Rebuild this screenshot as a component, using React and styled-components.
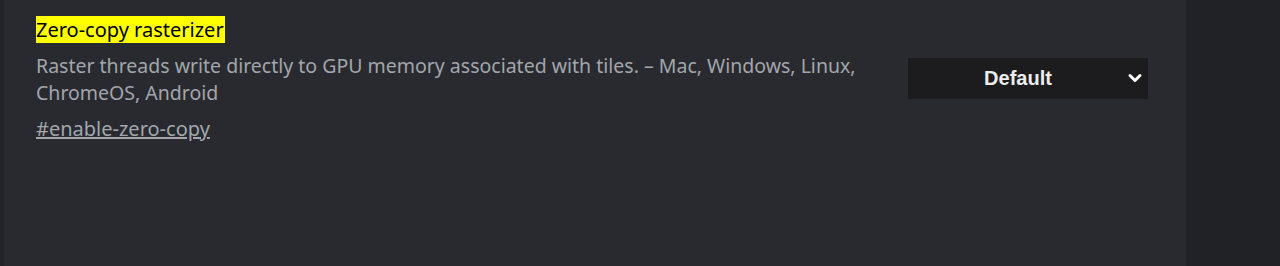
import React from 'react';
import styled, { createGlobalStyle } from 'styled-components';

const GlobalStyle = createGlobalStyle`
  html, body {
    margin: 0;
    padding: 0;
    background: #212226;
    height: 266px;
    overflow: hidden;
  }
`;

const Page = styled.div`
  display: flex;
  height: 266px;
  background: #212226;
`;

const Panel = styled.main`
  width: 1186px;
  height: 266px;
  border-left: 4px solid #222328;
  background: #292a2f;
  box-sizing: border-box;
  padding: 17px 38px 0 32px;
`;

const Experiment = styled.section`
  display: flex;
  align-items: flex-start;
  justify-content: space-between;
`;

const Details = styled.div`
  width: 849px;
  font-family: "Noto Sans", "Open Sans", sans-serif;
  font-size: 19.5px;
`;

const Title = styled.h2`
  margin: 0 0 10px;
  font-size: 20px;
  font-weight: 400;
  line-height: 25px;
  color: #000;
`;

const Mark = styled.mark`
  background: #ffff00;
  color: #000;
  padding: 0 1px 0 0;
`;

const Description = styled.p`
  margin: 0;
  color: #a2a6ac;
  line-height: 27px;
`;

const Permalink = styled.a`
  display: inline-block;
  margin-top: 11px;
  font-size: 20px;
  color: #a2a6ac;
  text-decoration: underline;
  line-height: 24px;
`;

const SelectBox = styled.div`
  position: relative;
  margin-top: 41px;
  width: 240px;
  height: 41px;
  box-sizing: border-box;
  padding-right: 20px;
  background: #1c1c1e;
  display: flex;
  align-items: center;
  justify-content: center;
  font-family: "Liberation Sans", Arial, sans-serif;
  font-size: 20px;
  font-weight: 700;
  color: #ececec;
`;

const Chevron = styled.svg`
  position: absolute;
  right: 5px;
  top: 14px;
`;

export default function App() {
  return (
    <>
      <GlobalStyle />
      <Page>
        <Panel>
          <Experiment>
            <Details>
              <Title><Mark>Zero-copy rasterizer</Mark></Title>
              <Description>
                Raster threads write directly to GPU memory associated with tiles. – Mac, Windows, Linux, ChromeOS, Android
              </Description>
              <Permalink href="#enable-zero-copy">#enable-zero-copy</Permalink>
            </Details>
            <SelectBox>
              Default
              <Chevron width="16" height="12" viewBox="0 0 16 12">
                <path d="M3 3.5 L8 8.5 L13 3.5" fill="none" stroke="#fff" strokeWidth="3" strokeLinecap="round" strokeLinejoin="round" />
              </Chevron>
            </SelectBox>
          </Experiment>
        </Panel>
      </Page>
    </>
  );
}
